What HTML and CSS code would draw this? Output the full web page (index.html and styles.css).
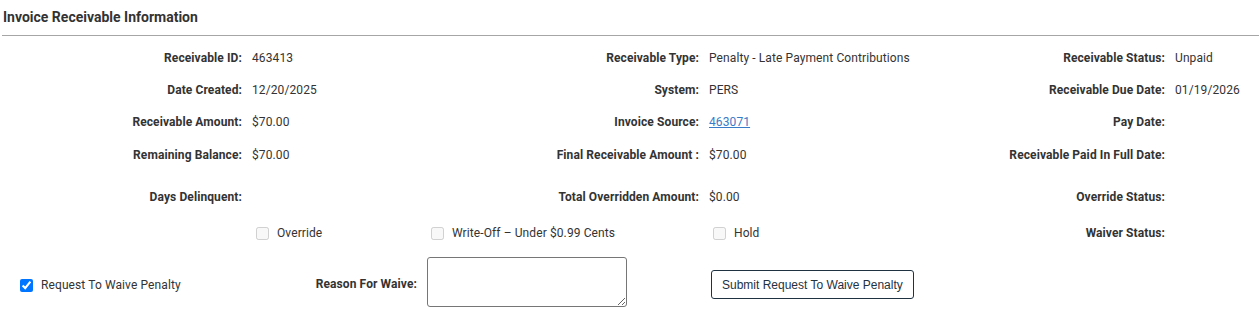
FILE: index.html
```
<!DOCTYPE html>
<html>
<head>
<meta charset="utf-8">
<link rel="stylesheet" href="styles.css">
</head>
<body>
<h2 class="section-title">Invoice Receivable Information</h2>
<div class="info-grid">
  <div class="lbl">Receivable ID:</div><div class="val">463413</div>
  <div class="lbl">Receivable Type:</div><div class="val">Penalty - Late Payment Contributions</div>
  <div class="lbl">Receivable Status:</div><div class="val">Unpaid</div>

  <div class="lbl">Date Created:</div><div class="val">12/20/2025</div>
  <div class="lbl">System:</div><div class="val">PERS</div>
  <div class="lbl">Receivable Due Date:</div><div class="val">01/19/2026</div>

  <div class="lbl">Receivable Amount:</div><div class="val">$70.00</div>
  <div class="lbl">Invoice Source:</div><div class="val"><a href="#" class="link">463071</a></div>
  <div class="lbl">Pay Date:</div><div class="val"></div>

  <div class="lbl">Remaining Balance:</div><div class="val">$70.00</div>
  <div class="lbl">Final Receivable Amount :</div><div class="val">$70.00</div>
  <div class="lbl">Receivable Paid In Full Date:</div><div class="val"></div>

  <div class="lbl">Days Delinquent:</div><div class="val"></div>
  <div class="lbl">Total Overridden Amount:</div><div class="val">$0.00</div>
  <div class="lbl">Override Status:</div><div class="val"></div>

  <div class="cell"></div>
  <label class="chk"><input type="checkbox" disabled><span>Override</span></label>
  <label class="chk"><input type="checkbox" disabled><span>Write-Off – Under $0.99 Cents</span></label>
  <label class="chk"><input type="checkbox" disabled><span>Hold</span></label>
  <div class="lbl">Waiver Status:</div><div class="val"></div>
</div>
<div class="waive-row">
  <label class="chk waive"><input type="checkbox" checked><span>Request To Waive Penalty</span></label>
  <div class="lbl waive-lbl">Reason For Waive:</div>
  <div class="ta-cell"><textarea class="reason"></textarea></div>
  <div class="btn-cell"><button class="btn">Submit Request To Waive Penalty</button></div>
</div>
</body>
</html>
```
FILE: styles.css
```
html, body {
  margin: 0;
  padding: 0;
  background: #fff;
}
body {
  font-family: Roboto, "Liberation Sans", Arial, sans-serif;
  font-size: 12px;
  letter-spacing: 0.1px;
  color: #333;
}
.section-title {
  margin: 0 0 0 2px;
  padding: 9px 0 9px 1px;
  font-size: 14px;
  font-weight: 700;
  line-height: 17px;
  letter-spacing: 0;
  color: #333;
  border-bottom: 1px solid #a6a6a6;
}
.info-grid {
  display: grid;
  grid-template-columns: 242px 165px 272px 211px 235px 1fr;
  grid-template-rows: 32px 32px 32px 33px 52px 20px;
  column-gap: 10px;
  margin-top: 6px;
  align-items: center;
}
.lbl {
  text-align: right;
  font-weight: 700;
  white-space: nowrap;
}
.val {
  white-space: nowrap;
}
.link {
  color: #3a7bc8;
  text-decoration: underline;
}
.chk {
  display: flex;
  align-items: center;
  white-space: nowrap;
}
.chk input {
  margin: 0 8px 0 4px;
  width: 13px;
  height: 13px;
}
.waive-row {
  display: grid;
  grid-template-columns: 242px 165px 272px 1fr;
  column-gap: 10px;
  align-items: start;
  margin-top: 14px;
}
.waive {
  padding-top: 20px;
  line-height: 16px;
}
.waive input {
  margin-left: 20px;
  margin-right: 8px;
}
.waive-lbl {
  padding-top: 19px;
  line-height: 16px;
}
.reason {
  display: block;
  box-sizing: border-box;
  width: 200px;
  height: 50px;
  margin: 0;
  border: 1px solid #767676;
  border-radius: 3px;
  font-family: inherit;
}
.btn-cell {
  padding: 13px 0 0 2px;
}
.btn {
  display: block;
  box-sizing: border-box;
  height: 29px;
  padding: 0 10px;
  background: #fff;
  border: 1px solid #1f3242;
  border-radius: 3px;
  font-family: "Liberation Sans", Arial, sans-serif;
  font-size: 12px;
  letter-spacing: 0;
  color: #1f3242;
  margin: 0;
}
```
